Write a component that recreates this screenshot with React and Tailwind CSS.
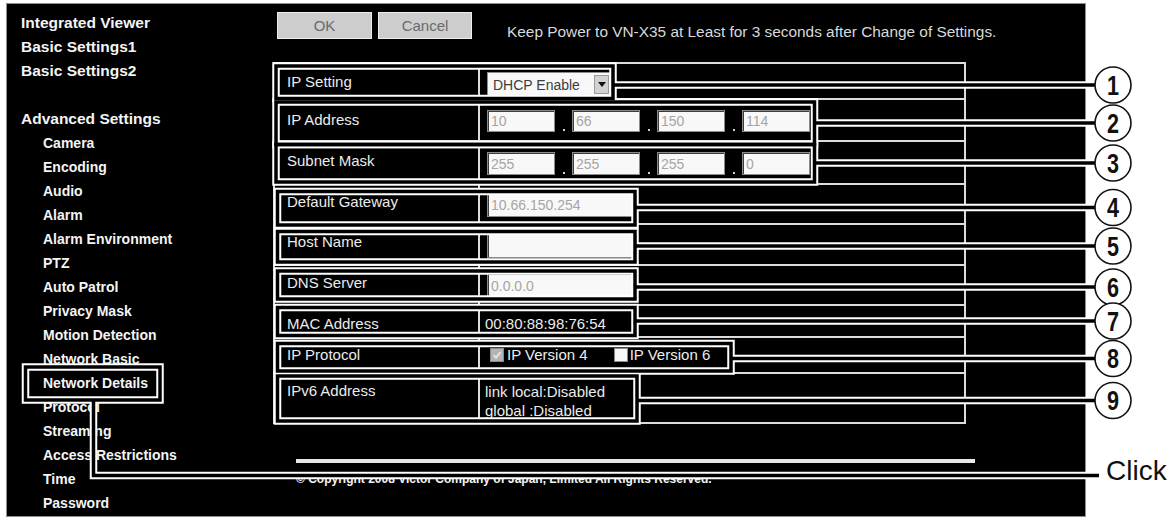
import React from "react";

const topLinks = ["Integrated Viewer", "Basic Settings1", "Basic Settings2"];
const subLinks = [
  "Camera",
  "Encoding",
  "Audio",
  "Alarm",
  "Alarm Environment",
  "PTZ",
  "Auto Patrol",
  "Privacy Mask",
  "Motion Detection",
  "Network Basic",
  "Network Details",
  "Protocol",
  "Streaming",
  "Access Restrictions",
  "Time",
  "Password",
];

// Callout frames: [x1, y1, x2, y2] of the centre line of each frame
const frames = [
  [276, 66, 613, 98.5],
  [276, 102, 814.5, 144.5],
  [276, 144.5, 814.5, 182],
  [277.5, 191.5, 635, 225],
  [277.5, 231.5, 635, 262],
  [277.5, 271, 635, 299],
  [277.5, 307.5, 635, 335.5],
  [277.5, 343.5, 731, 371],
  [277.5, 376, 637, 421],
];

// Leader lines: [start x, y] running right to the numbered circles
const leaders = [
  [613, 85],
  [814.5, 123],
  [814.5, 163],
  [635, 207.5],
  [635, 246],
  [635, 287],
  [635, 321],
  [731, 358.5],
  [637, 400.5],
];

const menuFrame = [25.5, 367, 160, 400];
const clickPath = "M93.5 400 V475.5 H1099";

function Shapes() {
  return (
    <>
      {frames.map(([x1, y1, x2, y2], i) => (
        <rect key={`f${i}`} x={x1} y={y1} width={x2 - x1} height={y2 - y1} />
      ))}
      {leaders.map(([x, y], i) => (
        <line key={`l${i}`} x1={x} y1={y} x2={1095} y2={y} />
      ))}
      <rect
        x={menuFrame[0]}
        y={menuFrame[1]}
        width={menuFrame[2] - menuFrame[0]}
        height={menuFrame[3] - menuFrame[1]}
      />
      <path d={clickPath} />
    </>
  );
}

function Annotations() {
  return (
    <svg
      className="absolute left-0 top-0 pointer-events-none"
      width="1171"
      height="520"
      viewBox="0 0 1171 520"
    >
      <g fill="none" stroke="#ffffff" strokeWidth="7.5" strokeLinejoin="miter">
        <Shapes />
      </g>
      <g fill="none" stroke="#000000" strokeWidth="3.5" strokeLinejoin="miter">
        <Shapes />
      </g>
      {leaders.map(([, y], i) => (
        <g key={`c${i}`}>
          <circle cx="1113" cy={y} r="18" fill="#ffffff" stroke="#111111" strokeWidth="1.6" />
          <text
            transform={`translate(1113 ${y + 9.6}) scale(0.8 1)`}
            textAnchor="middle"
            fontFamily="'Liberation Sans', Arial, sans-serif"
            fontWeight="700"
            fontSize="27"
            fill="#111111"
          >
            {i + 1}
          </text>
        </g>
      ))}
      <text
        x="1106"
        y="480"
        fontFamily="'Liberation Sans', Arial, sans-serif"
        fontSize="28"
        fill="#111111"
      >
        Click
      </text>
    </svg>
  );
}

function Field({ className, value }) {
  return (
    <div
      className={`flex items-center bg-[#f8f8f8] border border-[#8c8c8c] shadow-[inset_1px_1px_0_#3c3c3c] pl-[3px] text-[14px] leading-none text-[#a5a5a5] ${className}`}
    >
      {value}
    </div>
  );
}

function Quad({ values, height }) {
  return (
    <div className="flex items-end">
      {values.map((v, i) => (
        <React.Fragment key={i}>
          {i > 0 && (
            <div className="w-[17px] flex justify-center items-end pb-[1px]">
              <span className="block w-[2px] h-[2px] bg-[#cfcfcf]" />
            </div>
          )}
          <Field className={`w-[68px] ${height}`} value={v} />
        </React.Fragment>
      ))}
    </div>
  );
}

function Row({ label, rowClass, labelClass, valueClass, children }) {
  return (
    <div className={`flex ${rowClass}`}>
      <div
        className={`w-[205px] shrink-0 border-r-2 border-[#dcdcdc] pl-[12px] text-[15px] leading-[18px] text-[#ececec] whitespace-nowrap ${labelClass}`}
      >
        {label}
      </div>
      <div className={`flex-1 min-w-0 ${valueClass}`}>{children}</div>
    </div>
  );
}

function Box({ checked }) {
  return checked ? (
    <span className="flex items-center justify-center w-[14px] h-[14px] bg-[#b4b4b4] border border-[#8a8a8a]">
      <svg width="10" height="10" viewBox="0 0 10 10">
        <path d="M1.5 5.2 L4 7.6 L8.6 2.2" fill="none" stroke="#e6e6e6" strokeWidth="1.8" />
      </svg>
    </span>
  ) : (
    <span className="block w-[14px] h-[14px] bg-[#f8f8f8] border border-[#8a8a8a]" />
  );
}

export default function App() {
  return (
    <div className="relative w-[1171px] h-[520px] bg-white overflow-hidden pt-[3px] pl-[6px] font-['Liberation_Sans',Arial,sans-serif]">
      <div className="flex w-[1080px] h-[514px] bg-black border border-[#8d8d8d]">
        <aside className="w-[266px] shrink-0 pt-[7px] pl-[14px] font-bold text-[#f4f4f4]">
          {topLinks.map((t) => (
            <div key={t} className="h-[24px] leading-[24px] text-[15.5px] whitespace-nowrap">
              {t}
            </div>
          ))}
          <div className="h-[24px]" />
          <div className="h-[24px] leading-[24px] text-[15.5px] whitespace-nowrap">Advanced Settings</div>
          {subLinks.map((t) => (
            <div key={t} className="h-[24px] leading-[24px] text-[14px] pl-[22px] whitespace-nowrap">
              {t}
            </div>
          ))}
        </aside>

        <main className="flex-1 pt-[8px]">
          <div className="flex items-start h-[27px] pl-[4px]">
            <button className="w-[95px] h-[27px] bg-[#cdcdcd] border border-[#ececec] text-[15px] leading-none text-[#6a6a6a]">
              OK
            </button>
            <button className="ml-[6px] w-[94px] h-[27px] bg-[#cdcdcd] border border-[#ececec] text-[15px] leading-none text-[#6a6a6a]">
              Cancel
            </button>
            <p className="ml-[35px] mt-[11px] text-[15.4px] leading-[18px] text-[#d9d9d9] whitespace-nowrap">
              Keep Power to VN-X35 at Least for 3 seconds after Change of Settings.
            </p>
          </div>

          <div className="mt-[23px] w-[693px] border-2 border-[#dcdcdc]">
            <Row
              label="IP Setting"
              rowClass="h-[36px] border-b-2 border-[#dcdcdc]"
              labelClass="pt-[9px]"
              valueClass="pt-[8px] pl-[7px]"
            >
              <div className="flex items-center w-[125px] h-[25px] bg-[#f8f8f8] border border-[#8c8c8c]">
                <span className="flex-1 pl-[5px] text-[14px] leading-none text-[#3c3c3c] whitespace-nowrap">
                  DHCP Enable
                </span>
                <span className="flex items-center justify-center w-[15px] h-[19px] mr-[2px] bg-[#d2d2d2] border border-[#9a9a9a]">
                  <svg width="8" height="5" viewBox="0 0 8 5">
                    <path d="M0 0 H8 L4 5 Z" fill="#111111" />
                  </svg>
                </span>
              </div>
            </Row>
            <Row
              label="IP Address"
              rowClass="h-[42px] border-b-2 border-[#dcdcdc]"
              labelClass="pt-[11px]"
              valueClass="pt-[10px] pl-[7px]"
            >
              <Quad values={["10", "66", "150", "114"]} height="h-[22px]" />
            </Row>
            <Row
              label="Subnet Mask"
              rowClass="h-[43px] border-b-2 border-[#dcdcdc]"
              labelClass="pt-[10px]"
              valueClass="pt-[10px] pl-[7px]"
            >
              <Quad values={["255", "255", "255", "0"]} height="h-[23px]" />
            </Row>
            <Row
              label="Default Gateway"
              rowClass="h-[40px] border-b-2 border-[#dcdcdc]"
              labelClass="pt-[8px]"
              valueClass="pt-[8px] pl-[7px]"
            >
              <Field className="w-[146px] h-[24px]" value="10.66.150.254" />
            </Row>
            <Row
              label="Host Name"
              rowClass="h-[41px] border-b-2 border-[#dcdcdc]"
              labelClass="pt-[8px]"
              valueClass="pt-[8px] pl-[7px]"
            >
              <Field className="w-[146px] h-[25px]" value="" />
            </Row>
            <Row
              label="DNS Server"
              rowClass="h-[40px] border-b-2 border-[#dcdcdc]"
              labelClass="pt-[8px]"
              valueClass="pt-[7px] pl-[7px]"
            >
              <Field className="w-[146px] h-[25px] text-[#8e8e8e]" value="0.0.0.0" />
            </Row>
            <Row
              label="MAC Address"
              rowClass="h-[32px] border-b-2 border-[#dcdcdc]"
              labelClass="pt-[9px]"
              valueClass="pt-[9px] pl-[5px] text-[15px] leading-[18px] text-[#ececec] whitespace-nowrap"
            >
              00:80:88:98:76:54
            </Row>
            <Row
              label="IP Protocol"
              rowClass="h-[36px] border-b-2 border-[#dcdcdc]"
              labelClass="pt-[8px]"
              valueClass="flex items-center pl-[10px] text-[15px] leading-[18px] text-[#ececec] whitespace-nowrap"
            >
              <Box checked />
              <span className="ml-[3px]">IP Version 4</span>
              <span className="ml-[26px]">
                <Box />
              </span>
              <span className="ml-[2px]">IP Version 6</span>
            </Row>
            <Row
              label="IPv6 Address"
              rowClass="h-[48px]"
              labelClass="pt-[8px]"
              valueClass="pt-[8px] pl-[5px] text-[15px] leading-[19px] text-[#ececec] whitespace-nowrap"
            >
              <div>link local:Disabled</div>
              <div>global :Disabled</div>
            </Row>
          </div>

          <div className="mt-[35px] ml-[23px] w-[679px] h-[4px] bg-[#e8e8e8]" />
          <p className="mt-[9px] ml-[23px] text-[12px] font-bold leading-[14px] text-[#f2f2f2] whitespace-nowrap">
            © Copyright 2008 Victor Company of Japan, Limited All Rights Reserved.
          </p>
        </main>
      </div>
      <Annotations />
    </div>
  );
}
